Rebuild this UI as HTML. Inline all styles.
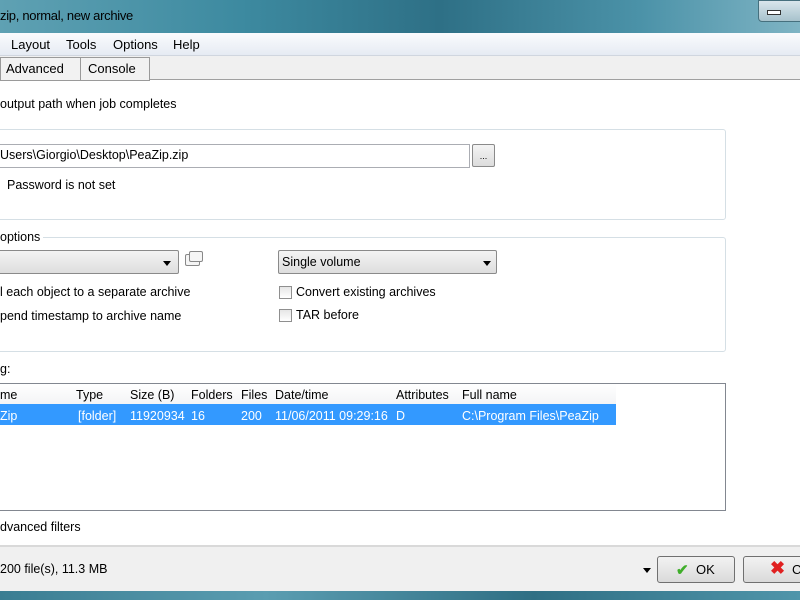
<!DOCTYPE html>
<html><head><style>
body{margin:0;width:800px;height:600px;overflow:hidden;position:relative;background:#fff;font-family:"Liberation Sans",sans-serif;font-size:12.5px;color:#000}
.a{position:absolute;white-space:nowrap}
.box{position:absolute;border:1px solid #d5dfe5;border-radius:3px}
.cb{position:absolute;width:11px;height:11px;border:1px solid #8f8f8f;background:linear-gradient(#e6e6e6,#fff)}
.dd{position:absolute;border:1px solid #8a8a8a;border-radius:2px;background:linear-gradient(#f4f4f4,#dedede)}
.arr{position:absolute;width:0;height:0;border-left:4px solid transparent;border-right:4px solid transparent;border-top:5px solid #000}
</style></head><body>
<div class="a" style="left:0;top:0;width:800px;height:33px;background:linear-gradient(90deg,#5fa1b3 0%,#3d8aa0 30%,#2e7086 55%,#4b92a8 80%,#7fb4c4 100%)"></div>
<div class="a" style="left:0;top:8px;font-size:13px;letter-spacing:-0.3px">zip, normal, new archive</div>
<div class="a" style="left:758px;top:0;width:42px;height:20px;border:1px solid #46707e;border-radius:0 0 0 4px;background:linear-gradient(#d9e6ec,#a7c2cc)"></div>
<div class="a" style="left:767px;top:10px;width:12px;height:3px;background:#fff;border:1px solid #333"></div>
<div class="a" style="left:0;top:33px;width:800px;height:22px;background:linear-gradient(#fafbfd,#e6ebf3);border-bottom:1px solid #d0d6df"></div>
<div class="a" style="left:11px;top:37px;font-size:13px">Layout</div>
<div class="a" style="left:66px;top:37px;font-size:13px">Tools</div>
<div class="a" style="left:113px;top:37px;font-size:13px">Options</div>
<div class="a" style="left:173px;top:37px;font-size:13px">Help</div>
<div class="a" style="left:0;top:56px;width:800px;height:23px;background:#f0f0f0;border-bottom:1px solid #a0a0a0"></div>
<div class="a" style="left:0;top:57px;width:80px;height:22px;border:1px solid #9a9a9a;background:#f2f2f2"></div>
<div class="a" style="left:80px;top:57px;width:68px;height:22px;border:1px solid #9a9a9a;background:#f2f2f2"></div>
<div class="a" style="left:6px;top:61px;font-size:13px">Advanced</div>
<div class="a" style="left:88px;top:61px;font-size:13px">Console</div>
<div class="a" style="left:0;top:97px">output path when job completes</div>
<div class="box" style="left:-5px;top:129px;width:729px;height:89px"></div>
<div class="a" style="left:-4px;top:144px;width:472px;height:22px;border:1px solid #abadb3;background:#fff"></div>
<div class="a" style="left:0;top:148px">Users\Giorgio\Desktop\PeaZip.zip</div>
<div class="a" style="left:472px;top:144px;width:21px;height:21px;border:1px solid #8a8a8a;border-radius:2px;background:linear-gradient(#f4f4f4,#dcdcdc);font-size:9px;text-align:center;line-height:22px">...</div>
<div class="a" style="left:7px;top:178px">Password is not set</div>
<div class="box" style="left:-5px;top:237px;width:729px;height:113px"></div>
<div class="a" style="left:0;top:230px;background:#fff;padding-right:3px">options</div>
<div class="dd" style="left:-4px;top:250px;width:181px;height:22px"></div><div class="arr" style="left:163px;top:261px"></div>
<div class="a" style="left:185px;top:254px;width:13px;height:10px;border:1px solid #888;border-radius:2px;background:#f5f5f5"></div>
<div class="a" style="left:189px;top:251px;width:12px;height:9px;border:1px solid #888;border-radius:2px;background:#f5f5f5"></div>
<div class="dd" style="left:278px;top:250px;width:217px;height:22px"></div><div class="arr" style="left:483px;top:261px"></div>
<div class="a" style="left:282px;top:255px">Single volume</div>
<div class="a" style="left:0;top:285px">l each object to a separate archive</div>
<div class="a" style="left:0;top:309px">pend timestamp to archive name</div>
<div class="cb" style="left:279px;top:286px"></div><div class="a" style="left:296px;top:285px">Convert existing archives</div>
<div class="cb" style="left:279px;top:309px"></div><div class="a" style="left:296px;top:308px">TAR before</div>
<div class="a" style="left:0;top:362px">g:</div>
<div class="a" style="left:-2px;top:383px;width:726px;height:126px;border:1px solid #828790;background:#fff"></div>
<div class="a" style="left:0;top:384px;width:616px;height:20px;background:linear-gradient(#fff,#f3f4f6);border-bottom:1px solid #e3e5e8"></div>
<div class="a" style="left:0;top:404px;width:616px;height:21px;background:#3399ff"></div>
<div class="a" style="left:0;top:388px;font-size:12.5px">
<span class="a" style="left:0">me</span><span class="a" style="left:76px">Type</span><span class="a" style="left:130px">Size (B)</span><span class="a" style="left:191px">Folders</span><span class="a" style="left:241px">Files</span><span class="a" style="left:275px">Date/time</span><span class="a" style="left:396px">Attributes</span><span class="a" style="left:462px">Full name</span></div>
<div class="a" style="left:0;top:409px;color:#fff">
<span class="a" style="left:0">Zip</span><span class="a" style="left:78px">[folder]</span><span class="a" style="left:130px">11920934</span><span class="a" style="left:191px">16</span><span class="a" style="left:241px">200</span><span class="a" style="left:275px">11/06/2011 09:29:16</span><span class="a" style="left:396px">D</span><span class="a" style="left:462px">C:\Program Files\PeaZip</span></div>
<div class="a" style="left:0;top:520px">dvanced filters</div>
<div class="a" style="left:0;top:545px;width:800px;height:46px;background:#f0f0f0;border-top:2px solid #d9d9d9"></div>
<div class="a" style="left:0;top:562px">200 file(s), 11.3 MB</div>
<div class="arr" style="left:643px;top:568px"></div>
<div class="a" style="left:657px;top:556px;width:76px;height:25px;border:1px solid #707070;border-radius:3px;background:linear-gradient(#f2f2f2,#dadada)"></div>
<div class="a" style="left:676px;top:561px;color:#3fae2a;font-size:15px;font-weight:bold">✔</div>
<div class="a" style="left:696px;top:562px;font-size:13px">OK</div>
<div class="a" style="left:743px;top:556px;width:70px;height:25px;border:1px solid #707070;border-radius:3px;background:linear-gradient(#f2f2f2,#dadada)"></div>
<div class="a" style="left:770px;top:558px;color:#e02020;font-size:18px;font-weight:bold">✖</div>
<div class="a" style="left:792px;top:562px;font-size:13px">C</div>
<div class="a" style="left:0;top:591px;width:800px;height:9px;background:linear-gradient(90deg,#3a7d92,#5b9db1,#2f6f84,#4f95aa)"></div>
</body></html>
